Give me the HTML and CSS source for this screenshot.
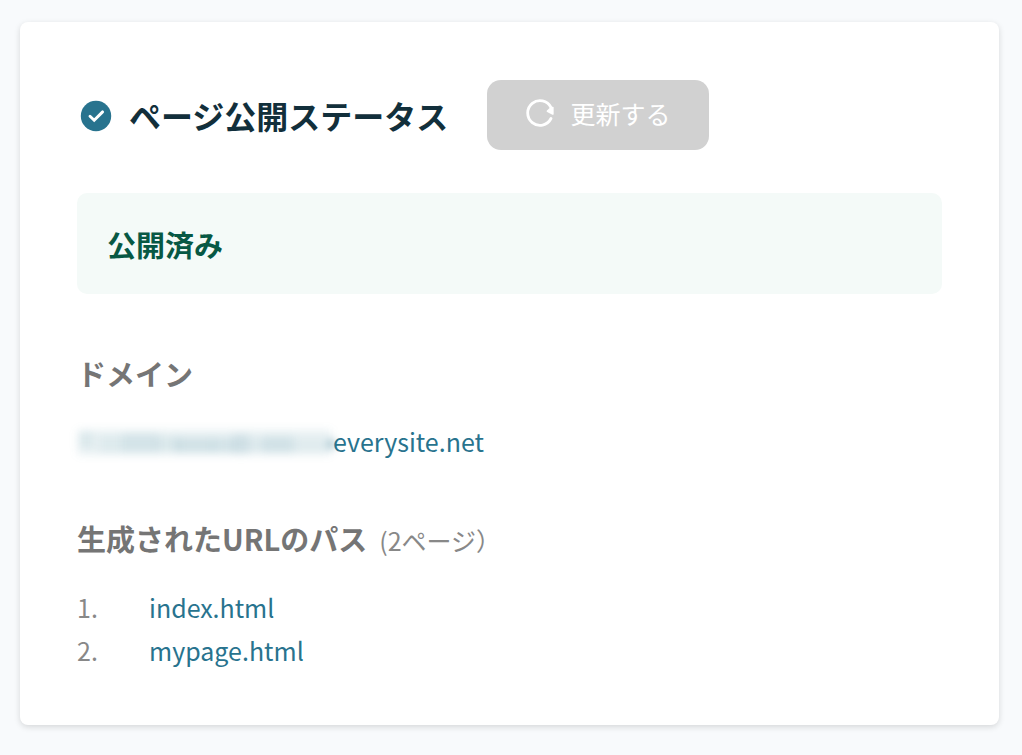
FILE: index.html
```html
<!DOCTYPE html>
<html lang="ja">
<head>
<meta charset="utf-8">
<meta name="viewport" content="width=device-width, initial-scale=1">
<title>ページ公開ステータス</title>
<link rel="stylesheet" href="styles.css">
</head>
<body>
<main class="card">
  <header class="header">
    <svg class="check" viewBox="0 0 32 32" aria-hidden="true">
      <circle cx="16" cy="16" r="15.2" fill="#28738e"/>
      <path d="M10 16.2 14.2 20.2 22.6 11.9" fill="none" stroke="#fff" stroke-width="2.9" stroke-linecap="round" stroke-linejoin="miter"/>
    </svg>
    <h1 class="title">ページ公開ステータス</h1>
    <button class="refresh" type="button" disabled>
      <svg class="refresh-icon" viewBox="0 0 28 28" aria-hidden="true">
        <path d="M25 19.500A12.300 12.300 0 1 1 25 8.500" fill="none" stroke="#fff" stroke-width="2.800" stroke-linecap="round"/>
        <path d="M26.800 8.500v6.400L21.500 12.200 25 9Z" fill="#fff" stroke="#fff" stroke-width="1.700" stroke-linejoin="round"/>
      </svg>
      更新する
    </button>
  </header>
  <p class="status">公開済み</p>
  <section class="section">
    <h2 class="heading">ドメイン</h2>
    <p class="domain">
      <svg class="masked" viewBox="0 0 256 32" preserveAspectRatio="none" aria-hidden="true">
        <g fill="#28738e">
          <rect x="1" y="4" width="253" height="25" opacity=".1"/>
          <rect x="2" y="6" width="14" height="16" opacity=".08"/>
          <rect x="22" y="10" width="26" height="16" opacity=".06"/>
          <rect x="46" y="8" width="36" height="18" opacity=".11"/>
          <rect x="80" y="11" width="22" height="14" opacity=".08"/>
          <rect x="98" y="12" width="40" height="14" opacity=".13"/>
          <rect x="136" y="12" width="22" height="14" opacity=".11"/>
          <rect x="156" y="9" width="16" height="18" opacity=".14"/>
          <rect x="172" y="12" width="17" height="13" opacity=".07"/>
          <rect x="187" y="11" width="30" height="15" opacity=".13"/>
          <rect x="217" y="13" width="36" height="12" opacity=".05"/>
          <rect x="252" y="14" width="5" height="8" opacity=".6"/>
        </g>
      </svg><a class="link" href="#">everysite.net</a>
    </p>
  </section>
  <section class="section">
    <h2 class="heading">生成されたURLのパス<span class="count">(2ページ）</span></h2>
    <ol class="paths">
      <li class="path"><a class="link" href="#">index.html</a></li>
      <li class="path"><a class="link" href="#">mypage.html</a></li>
    </ol>
  </section>
</main>
</body>
</html>
```
FILE: styles.css
```css
* {
  box-sizing: border-box;
}

body {
  margin: 0;
  padding: 22px 23px 30px 20px;
  background: #f8fafc;
  color: #888;
  font: 400 25px/43px "Noto Sans CJK JP", sans-serif;
}

h1, h2, p, ol {
  margin: 0;
  padding: 0;
}

.card {
  padding: 58px 57px 53px;
  border-radius: 8px;
  background: #fff;
  box-shadow: 0 2px 6px rgba(0, 0, 0, .14);
}

.header {
  display: flex;
  align-items: center;
}

.check {
  width: 32px;
  height: 32px;
  margin: 2px 17px 0 3px;
}

.title {
  color: #122f3b;
  font-size: 32px;
  line-height: 48px;
}

.refresh {
  display: flex;
  align-items: center;
  gap: 16px;
  height: 70px;
  margin-left: 39px;
  padding: 0 39px 4px;
  border: 0;
  border-radius: 14px;
  background: #d1d1d1;
  color: #fff;
  font: inherit;
}

.refresh-icon {
  width: 28px;
  height: 28px;
}

.status {
  margin-top: 43px;
  padding: 30px 30px 28px;
  border-radius: 10px;
  background: #f4faf8;
  color: #075844;
  font-size: 29px;
  font-weight: 700;
}

.section {
  margin-top: 58px;
}

.section + .section {
  margin-top: 54px;
}

.heading {
  color: #757575;
  font-size: 29px;
}

.count {
  margin-left: 12px;
  color: #888;
  font-size: 25px;
  font-weight: 400;
}

.domain {
  display: flex;
  align-items: center;
  margin-top: 25px;
}

.masked {
  width: 256px;
  height: 32px;
  overflow: visible;
  filter: blur(4px);
}

.link {
  color: #28738e;
  text-decoration: none;
}

.paths {
  margin-top: 24px;
  list-style: none;
  counter-reset: path;
}

.path {
  display: flex;
  counter-increment: path;
}

.path::before {
  content: counter(path) ".";
  width: 72px;
}
```
